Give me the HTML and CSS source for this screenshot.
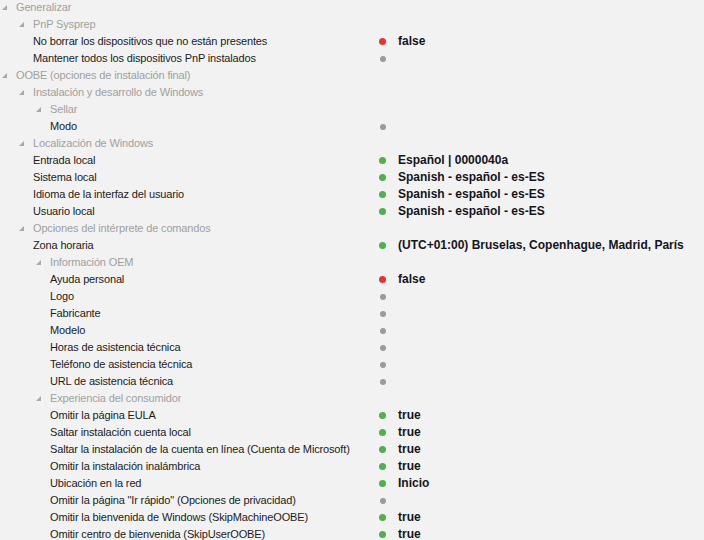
FILE: index.html
```html
<!DOCTYPE html>
<html lang="es">
<head>
<meta charset="utf-8">
<title>Configuración</title>
<link rel="stylesheet" href="styles.css">
</head>
<body>
<div class="tree">
  <div class="row group d0"><span class="lbl"><svg class="arr" viewBox="0 0 5 5"><polygon points="5,0 5,5 0,5"/></svg>Generalizar</span></div>
  <div class="row group d1"><span class="lbl"><svg class="arr" viewBox="0 0 5 5"><polygon points="5,0 5,5 0,5"/></svg>PnP Sysprep</span></div>
  <div class="row leaf d1"><span class="lbl">No borrar los dispositivos que no están presentes</span><span class="dot red"></span><span class="val">false</span></div>
  <div class="row leaf d1"><span class="lbl">Mantener todos los dispositivos PnP instalados</span><span class="dot grey"></span><span class="val"></span></div>
  <div class="row group d0"><span class="lbl"><svg class="arr" viewBox="0 0 5 5"><polygon points="5,0 5,5 0,5"/></svg>OOBE (opciones de instalación final)</span></div>
  <div class="row group d1"><span class="lbl"><svg class="arr" viewBox="0 0 5 5"><polygon points="5,0 5,5 0,5"/></svg>Instalación y desarrollo de Windows</span></div>
  <div class="row group d2"><span class="lbl"><svg class="arr" viewBox="0 0 5 5"><polygon points="5,0 5,5 0,5"/></svg>Sellar</span></div>
  <div class="row leaf d2"><span class="lbl">Modo</span><span class="dot grey"></span><span class="val"></span></div>
  <div class="row group d1"><span class="lbl"><svg class="arr" viewBox="0 0 5 5"><polygon points="5,0 5,5 0,5"/></svg>Localización de Windows</span></div>
  <div class="row leaf d1"><span class="lbl">Entrada local</span><span class="dot green"></span><span class="val">Español | 0000040a</span></div>
  <div class="row leaf d1"><span class="lbl">Sistema local</span><span class="dot green"></span><span class="val">Spanish - español - es-ES</span></div>
  <div class="row leaf d1"><span class="lbl">Idioma de la interfaz del usuario</span><span class="dot green"></span><span class="val">Spanish - español - es-ES</span></div>
  <div class="row leaf d1"><span class="lbl">Usuario local</span><span class="dot green"></span><span class="val">Spanish - español - es-ES</span></div>
  <div class="row group d1"><span class="lbl"><svg class="arr" viewBox="0 0 5 5"><polygon points="5,0 5,5 0,5"/></svg>Opciones del intérprete de comandos</span></div>
  <div class="row leaf d1"><span class="lbl">Zona horaria</span><span class="dot green"></span><span class="val">(UTC+01:00) Bruselas, Copenhague, Madrid, París</span></div>
  <div class="row group d2"><span class="lbl"><svg class="arr" viewBox="0 0 5 5"><polygon points="5,0 5,5 0,5"/></svg>Información OEM</span></div>
  <div class="row leaf d2"><span class="lbl">Ayuda personal</span><span class="dot red"></span><span class="val">false</span></div>
  <div class="row leaf d2"><span class="lbl">Logo</span><span class="dot grey"></span><span class="val"></span></div>
  <div class="row leaf d2"><span class="lbl">Fabricante</span><span class="dot grey"></span><span class="val"></span></div>
  <div class="row leaf d2"><span class="lbl">Modelo</span><span class="dot grey"></span><span class="val"></span></div>
  <div class="row leaf d2"><span class="lbl">Horas de asistencia técnica</span><span class="dot grey"></span><span class="val"></span></div>
  <div class="row leaf d2"><span class="lbl">Teléfono de asistencia técnica</span><span class="dot grey"></span><span class="val"></span></div>
  <div class="row leaf d2"><span class="lbl">URL de asistencia técnica</span><span class="dot grey"></span><span class="val"></span></div>
  <div class="row group d2"><span class="lbl"><svg class="arr" viewBox="0 0 5 5"><polygon points="5,0 5,5 0,5"/></svg>Experiencia del consumidor</span></div>
  <div class="row leaf d2"><span class="lbl">Omitir la página EULA</span><span class="dot green"></span><span class="val">true</span></div>
  <div class="row leaf d2"><span class="lbl">Saltar instalación cuenta local</span><span class="dot green"></span><span class="val">true</span></div>
  <div class="row leaf d2"><span class="lbl">Saltar la instalación de la cuenta en línea (Cuenta de Microsoft)</span><span class="dot green"></span><span class="val">true</span></div>
  <div class="row leaf d2"><span class="lbl">Omitir la instalación inalámbrica</span><span class="dot green"></span><span class="val">true</span></div>
  <div class="row leaf d2"><span class="lbl">Ubicación en la red</span><span class="dot green"></span><span class="val">Inicio</span></div>
  <div class="row leaf d2"><span class="lbl">Omitir la página "Ir rápido" (Opciones de privacidad)</span><span class="dot grey"></span><span class="val"></span></div>
  <div class="row leaf d2"><span class="lbl">Omitir la bienvenida de Windows (SkipMachineOOBE)</span><span class="dot green"></span><span class="val">true</span></div>
  <div class="row leaf d2"><span class="lbl">Omitir centro de bienvenida (SkipUserOOBE)</span><span class="dot green"></span><span class="val">true</span></div>
</div>
</body>
</html>
```

FILE: styles.css
```css
html, body {
  margin: 0;
  padding: 0;
  background: #f2f2f2;
  overflow: hidden;
}
body {
  font-family: "Liberation Sans", Arial, sans-serif;
  font-size: 12px;
  color: #1c1c1c;
}
.tree {
  margin-top: -1px;
}
.row {
  display: grid;
  grid-template-columns: 379px 19px 1fr;
  align-items: center;
  height: 17px;
  line-height: 17px;
  white-space: nowrap;
}
.lbl {
  display: flex;
  align-items: center;
  overflow: hidden;
  font-size: 11px;
  letter-spacing: -0.15px;
}
.group .lbl {
  color: #a0a0a0;
}
.arr {
  width: 5px;
  height: 5px;
  fill: #a8a8a8;
  margin-right: 9px;
  flex: none;
}
.group.d0 .lbl { padding-left: 2px; }
.group.d1 .lbl { padding-left: 19px; }
.group.d2 .lbl { padding-left: 36px; }
.leaf.d1 .lbl { padding-left: 33px; }
.leaf.d2 .lbl { padding-left: 50px; }
.dot {
  width: 7px;
  height: 7px;
  border-radius: 50%;
}
.dot.red { background: #e5352e; }
.dot.green { background: #52ae4e; }
.dot.grey { background: #9b9b9b; width: 6px; height: 6px; margin-left: 1px; }
.val {
  font-weight: bold;
  color: #151520;
}
```
